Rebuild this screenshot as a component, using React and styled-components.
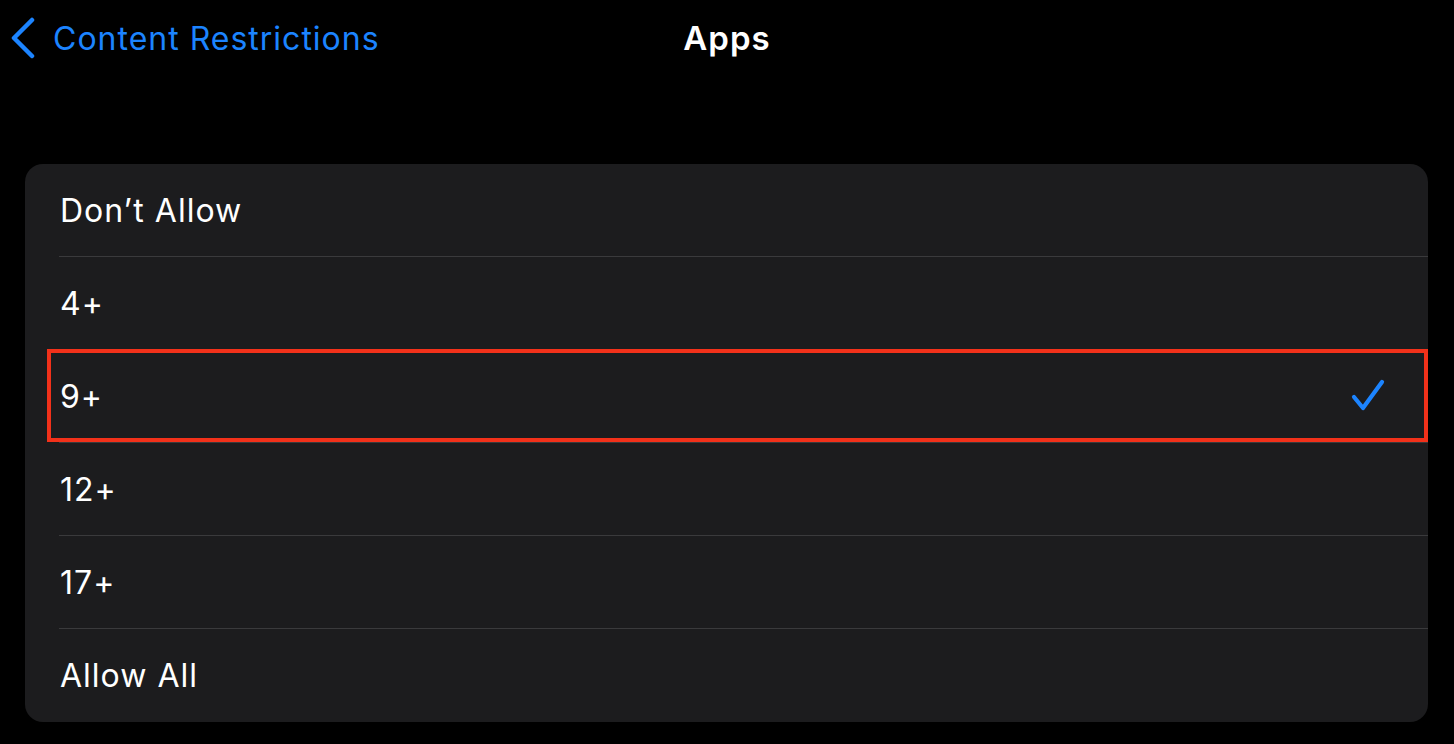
import React from 'react';
import styled, { createGlobalStyle } from 'styled-components';

const GlobalStyle = createGlobalStyle`
  html, body {
    margin: 0;
    padding: 0;
    background: #000;
  }
  body {
    font-family: Inter, "Open Sans", sans-serif;
    -webkit-font-smoothing: antialiased;
  }
`;

const options = ["Don’t Allow", '4+', '9+', '12+', '17+', 'Allow All'];
const selected = '9+';

const App = () => {
  return (
    <>
      <GlobalStyle />
      <Page>
        <NavBar>
          <BackButton>
            <svg width="26" height="42" viewBox="0 0 26 42" fill="none">
              <path d="M22 3 L4 21 L22 39" stroke="#1c84ff" strokeWidth="4.5" strokeLinecap="round" strokeLinejoin="round" />
            </svg>
            <BackLabel>Content Restrictions</BackLabel>
          </BackButton>
          <Title>Apps</Title>
        </NavBar>
        <Card>
          {options.map((label, i) => (
            <Row key={label} last={i === options.length - 1}>
              <Label>{label}</Label>
              {label === selected && (
                <>
                  <svg width="36" height="34" viewBox="0 0 36 34" fill="none">
                    <path d="M3 18 L12 29 L31 3" stroke="#1c84ff" strokeWidth="4.2" strokeLinecap="round" strokeLinejoin="round" />
                  </svg>
                  <Highlight />
                </>
              )}
            </Row>
          ))}
        </Card>
      </Page>
    </>
  );
};

export default App;

const Page = styled.div`
  width: 1454px;
  height: 744px;
  background: #000;
  overflow: hidden;
`;

const NavBar = styled.div`
  position: relative;
  height: 76px;
  display: flex;
  align-items: center;
  justify-content: center;
`;

const BackButton = styled.div`
  position: absolute;
  left: 10px;
  top: 17px;
  display: flex;
  align-items: center;
  gap: 17px;
`;

const BackLabel = styled.span`
  color: #1c84ff;
  font-size: 32px;
  font-weight: 400;
  letter-spacing: 1px;
`;

const Title = styled.h1`
  margin: 0;
  color: #fff;
  font-size: 33px;
  font-weight: 600;
  letter-spacing: 1px;
`;

const Card = styled.div`
  margin: 88px 26px 0 25px;
  background: #1c1c1e;
  border-radius: 18px;
`;

const Row = styled.div`
  position: relative;
  height: ${p => (p.last ? '93px' : '92px')};
  margin-left: 34px;
  padding-right: 41px;
  display: flex;
  align-items: center;
  justify-content: space-between;
  border-bottom: ${p => (p.last ? 'none' : '1px solid #3a3a3c')};
`;

const Label = styled.span`
  color: #fff;
  font-size: 32px;
  font-weight: 400;
  letter-spacing: 1px;
  padding-left: 1px;
`;

const Highlight = styled.div`
  position: absolute;
  left: -12px;
  right: 0;
  top: -1px;
  bottom: 0;
  border: 4px solid #f2311a;
  pointer-events: none;
`;
